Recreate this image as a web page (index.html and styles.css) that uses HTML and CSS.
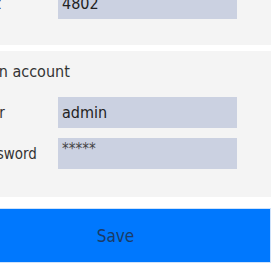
FILE: index.html
```html
<!DOCTYPE html>
<html lang="en">
<head>
    <meta charset="UTF-8">
    <meta name="viewport" content="width=device-width, initial-scale=1.0">
    <title>Settings</title>
    <link rel="stylesheet" href="styles.css">
</head>
<body>
    <div class="page">
        <section class="panel panel-top">
            <div class="row">
                <label for="port">Port</label>
                <input type="text" id="port" value="4802">
            </div>
        </section>
        <section class="panel panel-account">
            <h2>Admin account</h2>
            <div class="row">
                <label for="user">User</label>
                <input type="text" id="user" value="admin">
            </div>
            <div class="row">
                <label for="pass">Password</label>
                <input type="text" id="pass" class="masked" value="*****">
            </div>
        </section>
        <button class="save">Save</button>
    </div>
</body>
</html>
```

FILE: styles.css
```css
body {
    margin: 0;
    background: #fff;
    font-family: 'DejaVu Sans Condensed', 'DejaVu Sans', sans-serif;
    color: #333;
    overflow: hidden;
}
.page {
    width: 311px;
    margin: -12px 0 0 -40px;
}
.panel {
    background: #f4f4f4;
    padding: 0 34px 0 2px;
}
.panel-top {
    padding-bottom: 26px;
}
.panel-account {
    margin-top: 6px;
    padding-top: 12px;
    padding-bottom: 28px;
}
.panel h2 {
    margin: 0 0 16px;
    font-size: 16px;
    font-weight: normal;
    line-height: 18px;
}
.row {
    display: grid;
    grid-template-columns: 84px 179px;
    align-items: center;
    padding-left: 12px;
}
.row + .row {
    margin-top: 10px;
}
label {
    font-size: 15px;
}
input[type="text"] {
    height: 31px;
    box-sizing: border-box;
    border: none;
    padding: 0 4px;
    background: #cbd1e1;
    font-family: inherit;
    font-size: 16px;
    color: #222;
}
input.masked {
    padding-bottom: 9px;
    font-size: 15px;
    color: #444;
}
.save {
    display: block;
    width: 100%;
    height: 55px;
    margin-top: 11px;
    border: 1px solid #cfe2fa;
    background: #0078fe;
    color: #1b3b66;
    font-family: inherit;
    font-size: 17px;
    padding: 0;
}
```
